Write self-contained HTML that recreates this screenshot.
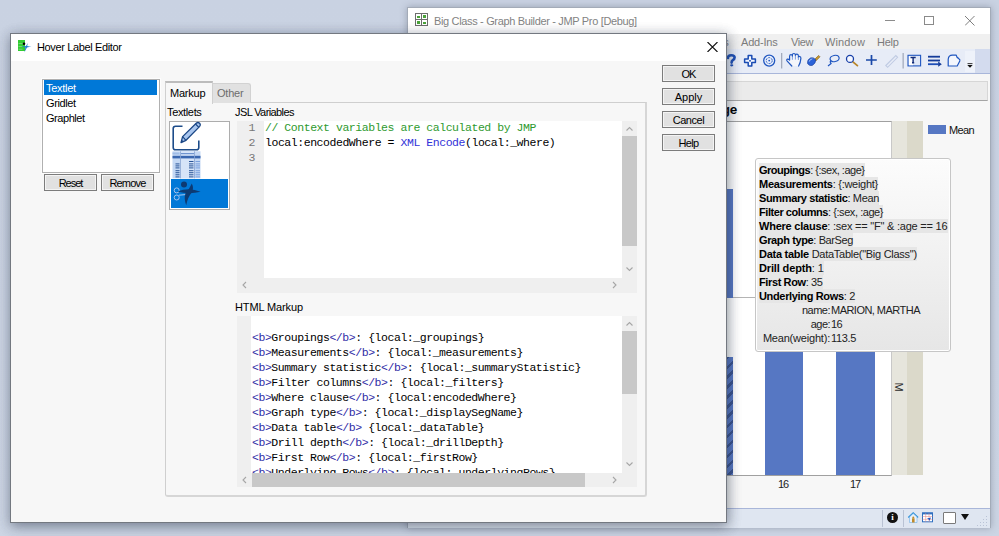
<!DOCTYPE html>
<html><head><meta charset="utf-8">
<style>
*{margin:0;padding:0;box-sizing:border-box}
html,body{width:999px;height:536px;overflow:hidden}
body{position:relative;background:linear-gradient(180deg,#c9d2e2 0%,#cbd4e3 60%,#ccd5e4 100%);font-family:"Liberation Sans",sans-serif;font-size:11px;color:#000}
.a{position:absolute}
.t{position:absolute;white-space:nowrap;line-height:14px}
.m{position:absolute;white-space:pre;font-family:"Liberation Mono",monospace;font-size:11.5px;letter-spacing:-0.45px;line-height:15px}
.tg{color:#302ca6}
.tt{position:absolute;left:759px;white-space:nowrap;line-height:14px;font-size:11px;color:#222}
.tt b{color:#000}
.btn{position:absolute;width:53px;height:17px;border:1px solid #7c7c7c;background:#e1e1e1;box-shadow:inset 0 0 0 1px #f4f4f4;text-align:center;line-height:16px;font-size:11px}
</style></head><body>

<!-- ========== BACKGROUND JMP WINDOW ========== -->
<div class="a" style="left:407px;top:7px;width:584px;height:521px;background:#f7f7f7;border:1px solid #a3abb8;box-shadow:0 0 7px rgba(60,70,90,.35)"></div>
<div class="a" style="left:408px;top:8px;width:582px;height:26px;background:#fff"></div>
<!-- app icon -->
<svg class="a" style="left:415px;top:13px" width="13" height="13" viewBox="0 0 13 13">
<rect x="0.5" y="0.5" width="12" height="12" fill="#fff" stroke="#6e6e6e"/>
<line x1="6.5" y1="0.5" x2="6.5" y2="12.5" stroke="#6e6e6e"/><line x1="0.5" y1="6.5" x2="12.5" y2="6.5" stroke="#6e6e6e"/>
<rect x="2" y="3" width="3" height="2" fill="#4aa33a"/><rect x="8" y="2" width="3" height="3" fill="#4aa33a"/>
<rect x="2" y="8" width="3" height="3" fill="#4aa33a"/><rect x="8" y="9" width="3" height="2" fill="#4aa33a"/>
</svg>
<div class="t" style="left:434px;top:14px;color:#838383;font-size:11px;letter-spacing:-0.34px">Big Class - Graph Builder - JMP Pro [Debug]</div>
<div class="a" style="left:885px;top:20px;width:10px;height:1px;background:#8c8c8c"></div>
<div class="a" style="left:924px;top:16px;width:10px;height:9px;border:1px solid #8a8a8a"></div>
<svg class="a" style="left:965px;top:16px" width="10" height="10" viewBox="0 0 10 10"><path d="M0 0L9.5 9.5M9.5 0L0 9.5" stroke="#7e7e7e" stroke-width="1"/></svg>
<!-- menu -->
<div class="a" style="left:408px;top:34px;width:582px;height:15px;background:#f0f0f0"></div>
<div class="t" style="left:698px;top:35px;color:#7b7b7b;letter-spacing:-0.20px">Tables</div>
<div class="t" style="left:741px;top:35px;color:#7b7b7b;letter-spacing:-0.20px">Add-Ins</div>
<div class="t" style="left:791px;top:35px;color:#7b7b7b;letter-spacing:-0.43px">View</div>
<div class="t" style="left:825px;top:35px;color:#7b7b7b;letter-spacing:0.14px">Window</div>
<div class="t" style="left:877px;top:35px;color:#7b7b7b;letter-spacing:-0.27px">Help</div>
<!-- toolbar -->
<div class="a" style="left:408px;top:49px;width:582px;height:25px;background:#e7ecf7;border-bottom:1px solid #a8b6da"></div>
<div class="a" style="left:975px;top:49px;width:15px;height:24px;background:#d3dbee"></div>
<div class="a" style="left:965px;top:51px;width:10px;height:21px;background:#eef2fa"></div>
<div class="a" style="left:408px;top:74px;width:582px;height:7px;background:#f6f6f6"></div>
<svg class="a" style="left:720px;top:49px" width="270" height="25" viewBox="720 49 270 25">
<!-- ? -->
<path d="M728 58Q727.8 55.2 731.2 55.2Q734.6 55.2 734.6 57.6Q734.6 59.2 732.8 60.2Q731.6 61 731.6 62.6" fill="none" stroke="#1e4fb6" stroke-width="2.6" stroke-linecap="round"/>
<ellipse cx="731.7" cy="65.3" rx="1.6" ry="1.1" fill="#1e4fb6"/>
<!-- move cross -->
<path d="M748.2 55.6H751.8V59H755.4V62.6H751.8V66H748.2V62.6H744.6V59H748.2Z" fill="#f2f6ff" stroke="#1a4cb4" stroke-width="1.5" stroke-linejoin="round"/>
<rect x="749.2" y="60" width="1.6" height="1.6" fill="#1a4cb4"/>
<!-- crosshair icon -->
<circle cx="769.2" cy="60.6" r="5.5" fill="#e8eefb" stroke="#1f56c0" stroke-width="1.3"/>
<circle cx="769.2" cy="60.6" r="3" fill="none" stroke="#1f56c0" stroke-width="1" stroke-dasharray="2 1.2"/>
<circle cx="769.2" cy="60.6" r="0.9" fill="#1f56c0"/>
<!-- separator -->
<rect x="781" y="53" width="1.3" height="15.5" fill="#a3abbd"/>
<!-- hand -->
<path d="M791.8 66L787 60.8Q786.3 59.6 787.4 59.1Q788.4 58.8 789.6 60V56.3Q789.6 54.6 791 54.6Q792.4 54.6 792.4 56.3V55.2Q792.4 53.5 793.9 53.5Q795.4 53.5 795.4 55.2V55.6Q795.6 54 797 54.2Q798.4 54.4 798.4 56V57.6Q798.6 56.3 799.8 56.5Q801 56.8 800.9 58.4Q800.6 62.5 798.6 66" fill="#f4f6fb" stroke="#1f56c0" stroke-width="1.2" stroke-linejoin="round" stroke-linecap="round"/>
<path d="M792.4 56.5V59.8M795.4 55.5V59.6M798.4 57V60" stroke="#6f95dc" stroke-width="0.9"/>
<!-- brush -->
<path d="M814.4 59.6L818.6 55.4L820 56.8L815.8 61Z" fill="#c9982e" stroke="#7a5a18" stroke-width="0.6"/>
<path d="M807.6 63.2Q807 59.6 810.6 57.9Q813.4 57 815.6 59.6Q816 63.2 812.6 65.2Q809 66.4 807.6 63.2Z" fill="#2a62d8" stroke="#1a3f9c" stroke-width="0.7"/>
<path d="M809.2 61.6Q809.6 59.4 812.4 58.8" fill="none" stroke="#a8c8f8" stroke-width="1"/>
<!-- lasso -->
<ellipse cx="834.6" cy="58.5" rx="4.6" ry="3.1" fill="none" stroke="#1f56c0" stroke-width="1.2" transform="rotate(-12 834.6 58.5)"/>
<path d="M831.2 60.6Q829.6 61.8 830.6 62.8Q831.6 63.2 830.8 63.8L828 66" fill="none" stroke="#1f56c0" stroke-width="1.2"/>
<!-- magnifier -->
<path d="M852.6 61.6L857.4 65.6" stroke="#b8862a" stroke-width="1.8" stroke-linecap="round"/>
<circle cx="850" cy="58.9" r="3.5" fill="#f4f7ff" stroke="#173fa8" stroke-width="1.3"/>
<!-- plus -->
<path d="M871.5 55V65M866 60H876.8" stroke="#1a48a8" stroke-width="1.7"/>
<!-- ruler disabled -->
<path d="M885.8 65.5L895.8 55.5L897.6 57.3L887.6 67.3Z" fill="none" stroke="#c0cbe3" stroke-width="1.1"/>
<!-- separator -->
<rect x="902.5" y="53" width="1.3" height="15.5" fill="#a3abbd"/>
<!-- T box -->
<rect x="908" y="55.3" width="12.6" height="10.6" fill="#dfe7f7" stroke="#1f56c0" stroke-width="1.1"/>
<rect x="909" y="56.2" width="4" height="9" fill="#fff"/>
<path d="M910.5 57.5H915.7M913.1 57.5V62.8M912 62.8H914.2" stroke="#102a78" stroke-width="1.4"/>
<!-- lines arrow -->
<rect x="928" y="55.8" width="12" height="1.8" fill="#153c9a"/>
<rect x="928" y="59.6" width="12" height="1.8" fill="#153c9a"/>
<rect x="928" y="63.3" width="10.6" height="1.8" fill="#1e4fb8"/>
<path d="M938.2 61.6L941.8 64.2L938.2 66.7Z" fill="#153c9a"/>
<!-- shape -->
<path d="M948.2 59.2Q948.6 55.2 952.4 55.2H956.2Q956.6 57.6 958.6 58.4Q960.4 59.6 959.8 61L957.2 66H948.2Z" fill="#f3f6fd" stroke="#1f56c0" stroke-width="1.2" stroke-linejoin="round"/>
<!-- overflow -->
<rect x="967.5" y="63.2" width="5" height="0.9" fill="#222"/>
<path d="M967.3 65H972.7L970 67.8Z" fill="#111"/>
</svg>

<!-- gray header bar -->
<div class="a" style="left:408px;top:81px;width:580px;height:20px;background:#ebebeb;border-top:1px solid #d6d6d6;border-bottom:1px solid #a5a5a5;border-right:1px solid #d6d6d6"></div>
<div class="t" style="left:537px;top:102px;width:200px;text-align:right;font-size:13.5px;font-weight:bold;line-height:16px;letter-spacing:-0.3px">Mean(weight) by age</div>
<!-- chart -->
<div class="a" style="left:600px;top:121px;width:292px;height:355px;background:#fff;border-top:1px solid #a0a0a0;border-bottom:1px solid #a0a0a0;border-right:1px solid #c8c8c8"></div>
<div class="a" style="left:600px;top:297px;width:291px;height:1px;background:#b4b4b4"></div>
<div class="a" style="left:892px;top:121px;width:15px;height:354px;background:#e6e5dc"></div>
<div class="a" style="left:907px;top:121px;width:16px;height:354px;background:#dbd9ca"></div>
<div class="t" style="left:892px;top:380px;width:14px;text-align:center;transform:rotate(90deg);font-size:11px;color:#2a2a2a">M</div>
<!-- bars -->
<div class="a" style="left:700px;top:189px;width:33px;height:109px;background:#5677c3"></div>
<div class="a" style="left:700px;top:357px;width:33px;height:118px;background:repeating-linear-gradient(135deg,#5677c3 0 4.5px,#38528f 4.5px 7px)"></div>
<div class="a" style="left:765px;top:330px;width:38px;height:145px;background:#5677c3"></div>
<div class="a" style="left:836px;top:330px;width:39px;height:145px;background:#5677c3"></div>
<div class="t" style="left:778px;top:477px;color:#222;letter-spacing:-1.00px">16</div>
<div class="t" style="left:850px;top:477px;color:#222;letter-spacing:-1.00px">17</div>
<!-- legend -->
<div class="a" style="left:928px;top:125px;width:18px;height:9px;background:#5677c3"></div>
<div class="t" style="left:949px;top:123px;color:#111;letter-spacing:-0.67px">Mean</div>
<!-- tooltip -->
<div class="a" style="left:755px;top:158px;width:196px;height:194px;border:1px solid #c6c6c6;border-radius:3px;background:linear-gradient(180deg,#fcfcfc 0%,#f0f0f0 55%,#e6e6e6 100%);box-shadow:inset 0 0 0 1px #fff"></div>
<div class="a" style="left:759px;top:163px;width:106px;height:14px;background:#e6e6e6"></div>
<div class="a" style="left:759px;top:177px;width:119px;height:14px;background:#e6e6e6"></div>
<div class="a" style="left:759px;top:191px;width:120px;height:14px;background:#e6e6e6"></div>
<div class="a" style="left:759px;top:205px;width:124px;height:14px;background:#e6e6e6"></div>
<div class="a" style="left:759px;top:219px;width:189px;height:14px;background:#e6e6e6"></div>
<div class="a" style="left:759px;top:233px;width:94px;height:14px;background:#e6e6e6"></div>
<div class="a" style="left:759px;top:247px;width:158px;height:14px;background:#e6e6e6"></div>
<div class="a" style="left:759px;top:261px;width:65px;height:14px;background:#e6e6e6"></div>
<div class="a" style="left:759px;top:275px;width:64px;height:14px;background:#e6e6e6"></div>
<div class="a" style="left:759px;top:289px;width:96px;height:14px;background:#e6e6e6"></div>
<div class="tt" style="top:163px;letter-spacing:-0.49px"><b>Groupings</b>: {:sex, :age}</div>
<div class="tt" style="top:177px;letter-spacing:-0.28px"><b>Measurements</b>: {:weight}</div>
<div class="tt" style="top:191px;letter-spacing:-0.37px"><b>Summary statistic</b>: Mean</div>
<div class="tt" style="top:205px;letter-spacing:-0.44px"><b>Filter columns</b>: {:sex, :age}</div>
<div class="tt" style="top:219px;letter-spacing:-0.22px"><b>Where clause</b>: :sex == "F" &amp; :age == 16</div>
<div class="tt" style="top:233px;letter-spacing:-0.38px"><b>Graph type</b>: BarSeg</div>
<div class="tt" style="top:247px;letter-spacing:-0.27px"><b>Data table</b> DataTable("Big Class")</div>
<div class="tt" style="top:261px;letter-spacing:-0.14px"><b>Drill depth</b>: 1</div>
<div class="tt" style="top:275px;letter-spacing:-0.38px"><b>First Row</b>: 35</div>
<div class="tt" style="top:289px;letter-spacing:-0.34px"><b>Underlying Rows</b>: 2</div>
<div class="tt" style="top:303px;left:700px;width:130px;text-align:right;letter-spacing:-0.5px">name:</div>
<div class="tt" style="top:303px;left:831px;letter-spacing:-0.53px">MARION, MARTHA</div>
<div class="tt" style="top:317px;left:700px;width:130px;text-align:right;letter-spacing:-0.55px">age:</div>
<div class="tt" style="top:317px;left:831px;letter-spacing:-0.6px">16</div>
<div class="tt" style="top:331px;left:700px;width:130px;text-align:right;letter-spacing:-0.2px">Mean(weight):</div>
<div class="tt" style="top:331px;left:831px;letter-spacing:-0.34px">113.5</div>
<!-- status bar -->
<div class="a" style="left:408px;top:508px;width:582px;height:1px;background:#a9b6d9"></div>
<div class="a" style="left:408px;top:509px;width:582px;height:19px;background:#dfe6f1"></div>
<div class="a" style="left:882px;top:510px;width:1px;height:17px;background:#b9c2d3"></div>
<div class="a" style="left:903px;top:510px;width:1px;height:17px;background:#b9c2d3"></div>
<div class="a" style="left:887px;top:512px;width:11px;height:11px;border-radius:50%;background:#111;color:#fff;font-size:9px;font-weight:bold;line-height:11px;text-align:center;font-family:'Liberation Serif',serif">i</div>
<div class="a" style="left:943px;top:512px;width:13px;height:12px;background:#fff;border:1px solid #7a7a7a;border-radius:1px"></div>
<svg class="a" style="left:961px;top:514px" width="8" height="6"><path d="M0 0H8L4 6Z" fill="#111"/></svg>
<svg class="a" style="left:905px;top:510px" width="85" height="18" viewBox="905 510 85 18">
<!-- home -->
<path d="M908.3 517.5L913.2 512.8L918.1 517.5" fill="none" stroke="#2c8fd8" stroke-width="1.3"/>
<path d="M909.5 517V522.5H917V517L913.2 513.6Z" fill="#e8f2fb" stroke="#6fb0e6" stroke-width="0.6"/>
<rect x="912" y="518.3" width="2.6" height="4.2" fill="#c08a2a"/>
<circle cx="913.3" cy="517.6" r="1" fill="#c08a2a"/>
<!-- table icon -->
<rect x="922.5" y="512.8" width="10" height="9" fill="#fff" stroke="#2f6fc0" stroke-width="1"/>
<rect x="922.5" y="512.8" width="10" height="1.6" fill="#2f6fc0"/>
<path d="M925.7 513V522M929 513V522M922.5 516.5H932.5M922.5 519.3H932.5" stroke="#e08080" stroke-width="0.5"/>
<path d="M927 518.5L931 517.5L929.5 521L928.8 519.6Z" fill="#1f56c0"/>
<!-- grip -->
<g fill="#b9c3d6"><rect x="986" y="516" width="1" height="1"/><rect x="986" y="519" width="1" height="1"/><rect x="983" y="519" width="1" height="1"/><rect x="986" y="522" width="1" height="1"/><rect x="983" y="522" width="1" height="1"/><rect x="980" y="522" width="1" height="1"/><rect x="986" y="525" width="1" height="1"/><rect x="983" y="525" width="1" height="1"/><rect x="980" y="525" width="1" height="1"/><rect x="977" y="525" width="1" height="1"/></g>
</svg>



<!-- ========== DIALOG ========== -->
<div class="a" style="left:10px;top:33px;width:717px;height:490px;background:#f7f7f7;border:1px solid #737880;box-shadow:1px 3px 12px rgba(40,50,70,.3)"></div>
<div class="a" style="left:11px;top:34px;width:715px;height:27px;background:#fff"></div>
<!-- dialog icon -->
<svg class="a" style="left:14px;top:36px" width="22" height="20" viewBox="14 36 22 20">
<rect x="18" y="40" width="7" height="11" fill="#33cc33"/>
<rect x="18.5" y="43" width="4.5" height="0.8" fill="#7fe07f"/><rect x="18.5" y="46" width="4" height="0.8" fill="#7fe07f"/><rect x="18.5" y="48.8" width="4" height="0.8" fill="#7fe07f"/>
<circle cx="24" cy="43.7" r="1.3" fill="#000"/>
<path d="M21.5 46.3Q25 46.5 26 46Q27 44.5 27.8 43Q27.4 45 27.2 46Q29.5 46.4 31.5 46.8Q29 47 27 47.6Q25.8 49.5 24.5 52.5Q25 49.5 25.3 47.5Q23.5 47 21.5 46.3Z" fill="#1f7fd0"/>
</svg>
<div class="t" style="left:37px;top:40px;letter-spacing:-0.37px">Hover Label Editor</div>
<svg class="a" style="left:707px;top:42px" width="11" height="10" viewBox="0 0 11 10"><path d="M0.5 0L10.5 10M10.5 0L0.5 10" stroke="#111" stroke-width="1.1"/></svg>

<!-- listbox -->
<div class="a" style="left:42px;top:79px;width:118px;height:94px;background:#fff;border:1px solid #b0b0b0;box-shadow:0 0 0 1px #fdfdfd"></div>
<div class="a" style="left:44px;top:80px;width:113px;height:15px;background:#0078d7"></div>
<div class="t" style="left:46px;top:81px;color:#fff;letter-spacing:-0.29px">Textlet</div>
<div class="t" style="left:46px;top:96px;letter-spacing:-0.39px">Gridlet</div>
<div class="t" style="left:46px;top:111px;letter-spacing:-0.45px">Graphlet</div>
<div class="btn" style="left:44px;top:174px;letter-spacing:-1.00px">Reset</div>
<div class="btn" style="left:101px;top:174px;letter-spacing:-0.80px">Remove</div>

<!-- tabs -->
<div class="a" style="left:165px;top:102px;width:482px;height:395px;border:1px solid #cfcfcf;border-right:2px solid #d6d6d6;border-bottom:2px solid #d6d6d6;border-radius:0 0 3px 3px;background:#f7f7f7"></div>
<div class="a" style="left:212px;top:83px;width:39px;height:20px;background:#e1e1e1;border:1px solid #d2d2d2;border-bottom:none;border-radius:0 3px 0 0"></div>
<div class="a" style="left:165px;top:81px;width:48px;height:23px;background:#f7f7f7;border-left:1px solid #d0d0d0;border-right:1px solid #d0d0d0;border-top:2px solid #bcbcbc"></div>
<div class="t" style="left:170px;top:86px;letter-spacing:-0.21px">Markup</div>
<div class="t" style="left:217px;top:86px;color:#6d6d6d;letter-spacing:-0.21px">Other</div>
<div class="t" style="left:167px;top:105px;letter-spacing:-0.35px">Textlets</div>
<div class="t" style="left:235px;top:105px;letter-spacing:-0.6px">JSL Variables</div>
<div class="t" style="left:235px;top:300px;letter-spacing:-0.12px">HTML Markup</div>

<!-- textlets icon box -->
<div class="a" style="left:169px;top:121px;width:61px;height:89px;background:#fff;border:1px solid #adadad"></div>
<div class="a" style="left:171px;top:179px;width:57px;height:29px;background:#0078d7"></div>
<svg class="a" style="left:169px;top:121px" width="61" height="89" viewBox="0 0 61 89">
<!-- edit icon -->
<path d="M13.6 5.1H7.2Q4.2 5.1 4.2 8.1V25.9Q4.2 28.9 7.2 28.9H27Q30 28.9 30 25.9V19.6" fill="none" stroke="#1d4c8a" stroke-width="1.8"/>
<path d="M11.5 21.7L13 16.05L27 2.45A3 3 0 0 1 31.2 6.75L17.2 20.35Z" fill="#a9c6ef" stroke="#173f7e" stroke-width="1.5" stroke-linejoin="round"/>
<path d="M13 16.05L17.2 20.35M24.9 4.55L29.1 8.85" stroke="#173f7e" stroke-width="1.3"/>
<path d="M11.5 21.7L12.3 18.7L14.5 20.9Z" fill="#173f7e"/>
<!-- table icon -->
<rect x="922.5" y="512.8" width="10" height="9" fill="#fff" stroke="#2f6fc0" stroke-width="1"/>
<rect x="922.5" y="512.8" width="10" height="1.6" fill="#2f6fc0"/>
<path d="M925.7 513V522M929 513V522M922.5 516.5H932.5M922.5 519.3H932.5" stroke="#e08080" stroke-width="0.5"/>
<path d="M927 518.5L931 517.5L929.5 521L928.8 519.6Z" fill="#1f56c0"/>
<!-- grip -->
<g fill="#b9c3d6"><rect x="986" y="516" width="1" height="1"/><rect x="986" y="519" width="1" height="1"/><rect x="983" y="519" width="1" height="1"/><rect x="986" y="522" width="1" height="1"/><rect x="983" y="522" width="1" height="1"/><rect x="980" y="522" width="1" height="1"/><rect x="986" y="525" width="1" height="1"/><rect x="983" y="525" width="1" height="1"/><rect x="980" y="525" width="1" height="1"/><rect x="977" y="525" width="1" height="1"/></g>
</svg>



<!-- ========== DIALOG ========== -->
<div class="a" style="left:10px;top:33px;width:717px;height:490px;background:#f7f7f7;border:1px solid #737880;box-shadow:1px 3px 12px rgba(40,50,70,.3)"></div>
<div class="a" style="left:11px;top:34px;width:715px;height:27px;background:#fff"></div>
<!-- dialog icon -->
<svg class="a" style="left:14px;top:36px" width="22" height="20" viewBox="14 36 22 20">
<rect x="18" y="40" width="7" height="11" fill="#33cc33"/>
<rect x="18.5" y="43" width="4.5" height="0.8" fill="#7fe07f"/><rect x="18.5" y="46" width="4" height="0.8" fill="#7fe07f"/><rect x="18.5" y="48.8" width="4" height="0.8" fill="#7fe07f"/>
<circle cx="24" cy="43.7" r="1.3" fill="#000"/>
<path d="M21.5 46.3Q25 46.5 26 46Q27 44.5 27.8 43Q27.4 45 27.2 46Q29.5 46.4 31.5 46.8Q29 47 27 47.6Q25.8 49.5 24.5 52.5Q25 49.5 25.3 47.5Q23.5 47 21.5 46.3Z" fill="#1f7fd0"/>
</svg>
<div class="t" style="left:37px;top:40px;letter-spacing:-0.37px">Hover Label Editor</div>
<svg class="a" style="left:707px;top:42px" width="11" height="10" viewBox="0 0 11 10"><path d="M0.5 0L10.5 10M10.5 0L0.5 10" stroke="#111" stroke-width="1.1"/></svg>

<!-- listbox -->
<div class="a" style="left:42px;top:79px;width:118px;height:94px;background:#fff;border:1px solid #b0b0b0;box-shadow:0 0 0 1px #fdfdfd"></div>
<div class="a" style="left:44px;top:80px;width:113px;height:15px;background:#0078d7"></div>
<div class="t" style="left:46px;top:81px;color:#fff;letter-spacing:-0.29px">Textlet</div>
<div class="t" style="left:46px;top:96px;letter-spacing:-0.39px">Gridlet</div>
<div class="t" style="left:46px;top:111px;letter-spacing:-0.45px">Graphlet</div>
<div class="btn" style="left:44px;top:174px;letter-spacing:-1.00px">Reset</div>
<div class="btn" style="left:101px;top:174px;letter-spacing:-0.80px">Remove</div>

<!-- tabs -->
<div class="a" style="left:165px;top:102px;width:482px;height:395px;border:1px solid #cfcfcf;border-right:2px solid #d6d6d6;border-bottom:2px solid #d6d6d6;border-radius:0 0 3px 3px;background:#f7f7f7"></div>
<div class="a" style="left:212px;top:83px;width:39px;height:20px;background:#e1e1e1;border:1px solid #d2d2d2;border-bottom:none;border-radius:0 3px 0 0"></div>
<div class="a" style="left:165px;top:81px;width:48px;height:23px;background:#f7f7f7;border-left:1px solid #d0d0d0;border-right:1px solid #d0d0d0;border-top:2px solid #bcbcbc"></div>
<div class="t" style="left:170px;top:86px;letter-spacing:-0.21px">Markup</div>
<div class="t" style="left:217px;top:86px;color:#6d6d6d;letter-spacing:-0.21px">Other</div>
<div class="t" style="left:167px;top:105px;letter-spacing:-0.35px">Textlets</div>
<div class="t" style="left:235px;top:105px;letter-spacing:-0.6px">JSL Variables</div>
<div class="t" style="left:235px;top:300px;letter-spacing:-0.12px">HTML Markup</div>

<!-- textlets icon box -->
<div class="a" style="left:169px;top:121px;width:61px;height:89px;background:#fff;border:1px solid #adadad"></div>
<div class="a" style="left:171px;top:179px;width:57px;height:29px;background:#0078d7"></div>
<svg class="a" style="left:169px;top:121px" width="61" height="89" viewBox="0 0 61 89">
<!-- edit icon -->
<path d="M13.5 5.2H6.5Q4.2 5.2 4.2 7.5V26.5Q4.2 28.8 6.5 28.8H27.5Q29.8 28.8 29.8 26.5V19.6" fill="none" stroke="#1d4c8a" stroke-width="1.6"/>
<path d="M12 21.6L13.6 15.6L27.2 2.3Q29 0.8 30.6 2.3Q32 3.9 30.5 5.6L17 19.3Z" fill="#a9c6ef" stroke="#1a4685" stroke-width="1.3" stroke-linejoin="round"/>
<path d="M13.6 15.6L17 19.3M26.5 3L29.9 6.4" stroke="#1a4685" stroke-width="1.2"/>
<path d="M12 21.6L12.8 18.7L14.8 20.7Z" fill="#1a4685"/>
<!-- table icon -->
<rect x="3.5" y="30.3" width="28" height="27" fill="#c4d8f4"/>
<rect x="11" y="30.3" width="14" height="27" fill="#d6e4f8"/>
<rect x="3.5" y="31.5" width="7" height="2" fill="#9fbce6"/>
<rect x="12" y="32" width="13" height="1.2" fill="#6f94cf"/>
<rect x="3.5" y="34.8" width="28" height="2.6" fill="#3a67b0"/>
<rect x="11" y="30.3" width="0.8" height="27" fill="#8aa6d2"/>
<rect x="25" y="30.3" width="0.8" height="27" fill="#8aa6d2"/>
<g fill="#2a5598"><rect x="6.5" y="42.4" width="4" height="1"/><rect x="6.5" y="44.4" width="4" height="1"/><rect x="6.5" y="46.4" width="4" height="1"/><rect x="6.5" y="49.2" width="4" height="1"/><rect x="6.5" y="51.2" width="4" height="1"/><rect x="6.5" y="53.3" width="4" height="1"/><rect x="6.5" y="55.4" width="4" height="1"/><rect x="20" y="40.0" width="4.5" height="1"/><rect x="20" y="42.4" width="4.5" height="1"/><rect x="20" y="44.4" width="4.5" height="1"/><rect x="20" y="46.4" width="4.5" height="1"/><rect x="20" y="49.2" width="4.5" height="1"/><rect x="20" y="51.2" width="4.5" height="1"/><rect x="20" y="53.3" width="4.5" height="1"/><rect x="20" y="55.4" width="4.5" height="1"/></g>
<g fill="#7aa0dc"><rect x="26.5" y="40.0" width="4.5" height="1"/><rect x="26.5" y="42.4" width="4.5" height="1"/><rect x="26.5" y="44.4" width="4.5" height="1"/><rect x="26.5" y="46.4" width="4.5" height="1"/><rect x="26.5" y="49.2" width="4.5" height="1"/><rect x="26.5" y="51.2" width="4.5" height="1"/><rect x="26.5" y="53.3" width="4.5" height="1"/><rect x="26.5" y="55.4" width="4.5" height="1"/></g>
<!-- graphlet icon on blue -->
<circle cx="7.7" cy="69.4" r="2.5" fill="none" stroke="#a6c4ee" stroke-width="1"/>
<circle cx="7.7" cy="76.5" r="2.5" fill="none" stroke="#a6c4ee" stroke-width="1"/>
<path d="M10 74.2L17.5 73.5" stroke="#a6c4ee" stroke-width="1"/>
<circle cx="15" cy="63.4" r="3" fill="#0d3a72"/>
<path d="M8.4 70.6Q20 65.8 31.6 70.8Q20 73.6 8.4 70.6Z" fill="#0d3a72"/>
<path d="M22.8 62.4Q25.4 67.5 22.6 71.8Q18.6 76.5 17.2 84.2Q14.6 77 16.6 72Q20.6 67.6 22.8 62.4Z" fill="#0d3a72"/>
</svg>

<!-- JSL editor -->
<div class="a" style="left:237px;top:121px;width:400px;height:172px;background:#efefef"></div>
<div class="a" style="left:264px;top:121px;width:358px;height:157px;background:#fff"></div>
<div class="a" style="left:622px;top:136px;width:15px;height:110px;background:#c8c8c8"></div>
<div class="m" style="left:237px;top:120px;width:18px;text-align:right;color:#777">1
2
3</div>
<div class="m" style="left:265px;top:120px"><span style="color:#2e9a2e">// Context variables are calculated by JMP</span>
local:encodedWhere = <span style="color:#3232d8">XML Encode</span>(local:_where)
</div>

<!-- HTML editor -->
<div class="a" style="left:237px;top:316px;width:400px;height:171px;background:#efefef"></div>
<div class="a" style="left:251px;top:316px;width:371px;height:157px;background:#fff"></div>
<div class="a" style="left:622px;top:331px;width:15px;height:63px;background:#c8c8c8"></div>
<div class="a" style="left:252px;top:473px;width:333px;height:14px;background:#c8c8c8"></div>
<div class="a" style="left:251px;top:316px;width:371px;height:157px;overflow:hidden">
<div class="m" style="left:1px;top:-1px">
<span class="tg">&lt;b&gt;</span>Groupings<span class="tg">&lt;/b&gt;</span>: {local:_groupings}
<span class="tg">&lt;b&gt;</span>Measurements<span class="tg">&lt;/b&gt;</span>: {local:_measurements}
<span class="tg">&lt;b&gt;</span>Summary statistic<span class="tg">&lt;/b&gt;</span>: {local:_summaryStatistic}
<span class="tg">&lt;b&gt;</span>Filter columns<span class="tg">&lt;/b&gt;</span>: {local:_filters}
<span class="tg">&lt;b&gt;</span>Where clause<span class="tg">&lt;/b&gt;</span>: {local:encodedWhere}
<span class="tg">&lt;b&gt;</span>Graph type<span class="tg">&lt;/b&gt;</span>: {local:_displaySegName}
<span class="tg">&lt;b&gt;</span>Data table<span class="tg">&lt;/b&gt;</span> {local:_dataTable}
<span class="tg">&lt;b&gt;</span>Drill depth<span class="tg">&lt;/b&gt;</span>: {local:_drillDepth}
<span class="tg">&lt;b&gt;</span>First Row<span class="tg">&lt;/b&gt;</span>: {local:_firstRow}
<span class="tg">&lt;b&gt;</span>Underlying Rows<span class="tg">&lt;/b&gt;</span>: {local:_underlyingRows}
</div></div>

<!-- scroll arrows -->
<svg class="a" style="left:0;top:0" width="999" height="536">
<g fill="none" stroke="#a6a6a6" stroke-width="1.1">
<path d="M626.5 130.5L629.5 127.5L632.5 130.5"/>
<path d="M626.5 267.5L629.5 270.5L632.5 267.5"/>
<path d="M246 282L243 285L246 288"/>
<path d="M613 282L616 285L613 288"/>
<path d="M626.5 325.5L629.5 322.5L632.5 325.5"/>
<path d="M626.5 462.5L629.5 465.5L632.5 462.5"/>
<path d="M246 477L243 480L246 483"/>
<path d="M613 477L616 480L613 483"/>
</g></svg>
<!-- right buttons -->
<div class="btn" style="left:662px;top:65px;letter-spacing:-1.0px">OK</div>
<div class="btn" style="left:662px;top:88px;letter-spacing:0.00px">Apply</div>
<div class="btn" style="left:662px;top:111px;letter-spacing:-0.44px">Cancel</div>
<div class="btn" style="left:662px;top:134px;letter-spacing:-0.67px">Help</div>


</body></html>
